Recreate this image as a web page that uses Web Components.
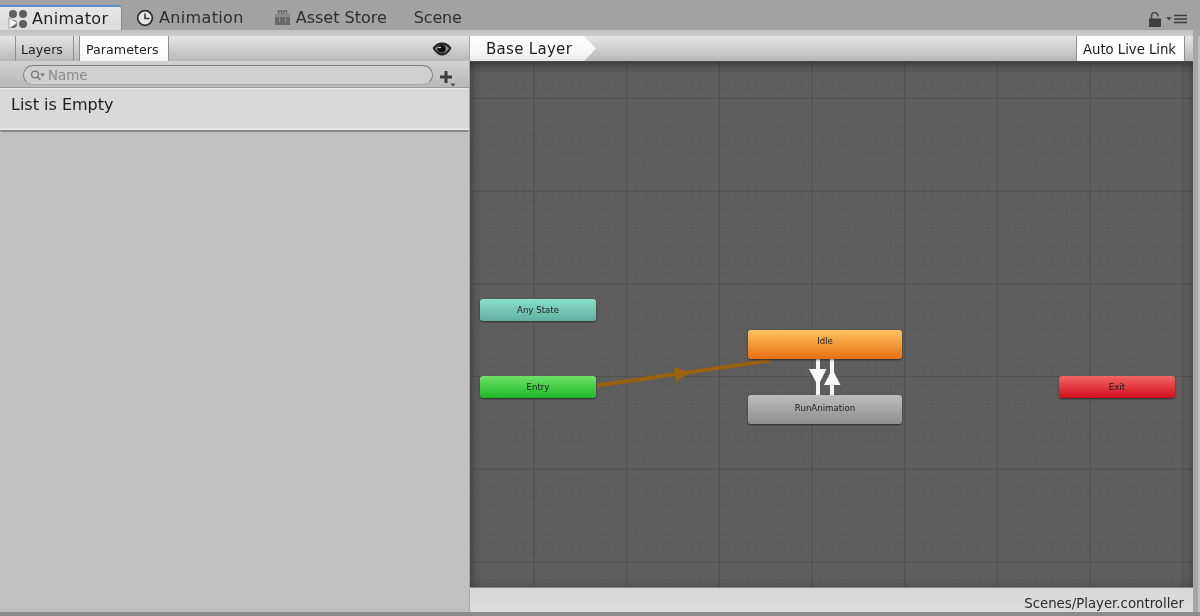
<!DOCTYPE html>
<html>
<head>
<meta charset="utf-8">
<title>Animator</title>
<style>
  html, body { margin: 0; padding: 0; background: #a4a4a4; overflow: hidden; }
</style>
</head>
<body>
<animator-window></animator-window>
<script>
class EditorTab extends HTMLElement {
  connectedCallback() {
    this.attachShadow({ mode: 'open' });
    this.shadowRoot.innerHTML = `
      <style>
        :host {
          display: flex;
          align-items: center;
          box-sizing: border-box;
          height: 25px;
          gap: 5px;
          padding: 0 8px 0 9px;
          font-size: 16px;
          letter-spacing: .35px;
          color: #2e2e2e;
        }
        :host([active]) {
          background: linear-gradient(#e6e6e6, #dcdcdc);
          border-top: 2px solid #5b8fd0;
          border-right: 1px solid #8c8c8c;
          border-radius: 0 3px 0 0;
          color: #1e1e1e;
          gap: 4px;
        }
      </style>
      <slot name="icon"></slot><slot></slot>
    `;
  }
}
customElements.define('editor-tab', EditorTab);

class ToolbarButton extends HTMLElement {
  connectedCallback() {
    this.attachShadow({ mode: 'open' });
    this.shadowRoot.innerHTML = `
      <style>
        :host {
          display: flex;
          align-items: center;
          box-sizing: border-box;
          height: 25px;
          padding: 1px 10px 0 5px;
          font-size: 12.7px;
          color: #1c1c1c;
          border-left: 1px solid #8f8f8f;
          border-right: 1px solid #8f8f8f;
        }
        :host([on]) {
          background: linear-gradient(#fff, #fff 70%, #f4f4f4);
          padding: 1px 9px 0 6px;
        }
      </style>
      <slot></slot>
    `;
  }
}
customElements.define('toolbar-button', ToolbarButton);

class ParametersPanel extends HTMLElement {
  connectedCallback() {
    this.attachShadow({ mode: 'open' });
    this.shadowRoot.innerHTML = `
      <style>
        :host {
          display: flex;
          flex-direction: column;
          background: #c0c0c0;
          box-sizing: border-box;
          width: 469px;
          min-height: 0;
        }
        .bar {
          display: flex;
          align-items: center;
          height: 25px;
          padding: 0 17px 0 15px;
          gap: 5px;
          background: linear-gradient(#e4e4e4, #d8d8d8 30%, #b8b8b8);
        }
        .eye { margin-left: auto; display: block; }
        .search-row {
          display: flex;
          align-items: flex-start;
          gap: 6px;
          height: 27px;
          box-sizing: border-box;
          padding: 4px 13px 0 23px;
          background: linear-gradient(#d2d2d2, #b8b8b8);
          border-bottom: 1px solid #9c9c9c;
        }
        .search {
          flex: 1;
          display: flex;
          align-items: center;
          box-sizing: border-box;
          height: 20px;
          padding-left: 6px;
          gap: 3px;
          border: 1.5px solid #7e7e7e;
          border-bottom-color: #a8a8a8;
          border-radius: 11px;
          background: #d0d0d0;
          font-size: 13.4px;
          color: #8a8a8a;
        }
        .plus { margin-top: 5px; }
        .list {
          height: 44px;
          box-sizing: border-box;
          padding: 6px 11px 0;
          background: #d9d9d9;
          border-bottom: 2px solid #868686;
          border-radius: 0 0 2px 2px;
          box-shadow: inset 0 1px 0 #e8e8e8, inset 0 -2px 0 #e6e6e6;
          font-size: 16px;
          color: #1c1c1c;
          line-height: 22px;
        }
      </style>
      <div class="bar">
        <toolbar-button>Layers</toolbar-button>
        <toolbar-button on>Parameters</toolbar-button>
        <svg class="eye" width="20" height="14" viewBox="0 0 20 14">
          <path d="M.5 6C4 1.5 7 .5 10 .5s6.500 1 9.500 5.500c-3 5.500-6 7.500-9.500 7.500S4 11.500.5 6z" fill="#262626"/>
          <path d="M3 6.500C5 3.500 7.500 3 10 3s5 .5 7 3.500c-2 3-4.500 4.500-7 4.500S5 9.500 3 6.500z" fill="#8f8f8f"/>
          <ellipse cx="9.500" cy="6.800" rx="4.200" ry="3.800" fill="#0c0c0c"/>
          <path d="M6 5.500h3" stroke="#d8d8d8" stroke-width="1.200"/>
        </svg>
      </div>
      <div class="search-row">
        <div class="search">
          <svg width="15" height="13" viewBox="0 0 15 13">
            <circle cx="5" cy="5.500" r="3.400" fill="none" stroke="#777" stroke-width="1.400"/>
            <path d="M7.500 8l3 3" stroke="#777" stroke-width="1.600"/>
            <path d="M10 4.500h5l-2.500 3z" fill="#777"/>
          </svg>
          <span>Name</span>
        </div>
        <svg class="plus" width="17" height="18" viewBox="0 0 17 18">
          <path d="M7 1v12M1 7h12" stroke="#3a3a3a" stroke-width="3"/>
          <path d="M11.500 13.500h5l-2.500 3z" fill="#4a4a4a"/>
        </svg>
      </div>
      <div class="list">List is Empty</div>
    `;
  }
}
customElements.define('parameters-panel', ParametersPanel);

class StateNode extends HTMLElement {
  connectedCallback() {
    this.attachShadow({ mode: 'open' });
    this.shadowRoot.innerHTML = `
      <style>
        :host {
          position: absolute;
          display: flex;
          align-items: center;
          justify-content: center;
          box-sizing: border-box;
          left: var(--x);
          top: var(--y);
          width: var(--w);
          height: var(--h);
          padding-bottom: var(--pb, 1px);
          background: linear-gradient(var(--c1), var(--c2));
          border-radius: 3px;
          box-shadow: 0 1px 2px rgba(0,0,0,.55);
          font-size: 8.6px;
          color: #1c1c1c;
        }
      </style>
      <slot></slot>
    `;
  }
}
customElements.define('state-node', StateNode);

class GraphView extends HTMLElement {
  connectedCallback() {
    this.attachShadow({ mode: 'open' });
    this.shadowRoot.innerHTML = `
      <style>
        :host {
          display: block;
          position: relative;
          flex: 1;
          min-height: 0;
          overflow: hidden;
          background-color: #5e5e5e;
          background-image:
            linear-gradient(to right, #505050 1px, transparent 1px),
            linear-gradient(to bottom, #505050 1px, transparent 1px),
            linear-gradient(to right, #5a5a5a 1px, transparent 1px),
            linear-gradient(to bottom, #5a5a5a 1px, transparent 1px);
          background-size: 92.7px 92.7px, 92.7px 92.7px, 9.27px 9.27px, 9.27px 9.27px;
          background-position: 63.5px 0, 0 36px, 8px 0, 0 8px;
        }
        .shade {
          position: absolute;
          inset: 0;
          box-shadow: inset 8px 0 8px -6px rgba(0,0,0,.3), inset 0 10px 8px -6px rgba(0,0,0,.35), inset -8px 0 8px -6px rgba(0,0,0,.2), inset 0 -8px 8px -6px rgba(0,0,0,.15);
          pointer-events: none;
        }
        svg { position: absolute; left: 0; top: 0; }
      </style>
      <div class="shade"></div>
      <svg width="723" height="525" viewBox="470 62 723 525">
        <path d="M597 385.500 770 360.500" stroke="#9a620f" stroke-width="3.800"/>
        <path d="M674 367 690 372.500 676 382z" fill="#9a620f"/>
        <path d="M818 359v36M832 359v36" stroke="#f4f4f4" stroke-width="4"/>
        <path d="M809 369h17.500l-8.500 17z" fill="#f8f8f8"/>
        <path d="M824 385h16.500l-8.200-16z" fill="#f8f8f8"/>
      </svg>
      <slot></slot>
    `;
  }
}
customElements.define('graph-view', GraphView);

class AnimatorWindow extends HTMLElement {
  connectedCallback() {
    this.attachShadow({ mode: 'open' });
    this.shadowRoot.innerHTML = `
      <style>
        :host {
          display: flex;
          flex-direction: column;
          box-sizing: border-box;
          width: 1200px;
          height: 616px;
          overflow: hidden;
          font-family: "DejaVu Sans", Verdana, sans-serif;
          background: #a6a6a6;
          border-bottom: 4px solid #8b8b8b;
          filter: blur(.35px);
        }
        .tabs {
          display: flex;
          align-items: flex-end;
          height: 30px;
          flex: none;
          background: #a2a2a2;
        }
        .tabs .spacer { flex: 1; }
        .tab-tools {
          display: flex;
          align-items: center;
          gap: 4px;
          height: 25px;
          padding: 3px 12px 0 0;
          box-sizing: border-box;
        }
        .strip { height: 6px; flex: none; background: linear-gradient(#c2c2c2, #cdcdcd); margin-right: 7px; }
        .body {
          flex: 1;
          display: flex;
          min-height: 0;
          padding-right: 5px;
          border-right: 2px solid #c0c0c0;
        }
        .right {
          flex: 1;
          display: flex;
          flex-direction: column;
          min-width: 0;
          border-left: 1px solid #a6a6a6;
        }
        .crumbs {
          display: flex;
          justify-content: space-between;
          flex: none;
          height: 26px;
          box-sizing: border-box;
          background: linear-gradient(#e4e4e4, #d8d8d8 30%, #b8b8b8);
          border-bottom: 1px solid #4a4a4a;
          padding-right: 8px;
        }
        .crumb {
          display: flex;
          align-items: center;
          width: 126px;
          height: 25px;
          box-sizing: border-box;
          padding-left: 16px;
          font-size: 15px;
          letter-spacing: .3px;
          color: #1c1c1c;
          background: linear-gradient(#fff, #f6f6f6 70%, #e8e8e8);
          clip-path: polygon(0 0, 114px 0, 100% 50%, 114px 100%, 0 100%);
        }
        .status {
          flex: none;
          height: 25px;
          box-sizing: border-box;
          display: flex;
          align-items: center;
          justify-content: flex-end;
          padding: 7px 9px 0 0;
          background: linear-gradient(#d8d8d8, #dcdcdc);
          border-top: 1px solid #8c8c8c;
          font-size: 13.300px;
          color: #2a2a2a;
        }
      </style>
      <div class="tabs">
        <editor-tab active style="width:122px">
          <svg slot="icon" width="20" height="20" viewBox="0 0 20 20" style="margin-left:-1px">
            <circle cx="5" cy="5" r="4" fill="#5f5f5f"/><circle cx="15" cy="5" r="4" fill="#5f5f5f"/>
            <circle cx="5" cy="15" r="4" fill="#5f5f5f"/><circle cx="15" cy="15" r="4" fill="#5f5f5f"/>
            <path d="M1 8.500 9.500 14 1 19.500z" fill="#f2f2f2" stroke="#8a8a8a" stroke-width=".7"/>
          </svg>
          Animator
        </editor-tab>
        <editor-tab style="margin-left:6px;padding-left:8px">
          <svg slot="icon" width="18" height="18" viewBox="0 0 18 18">
            <circle cx="9" cy="9" r="7.300" fill="#e6e6e6" stroke="#2e2e2e" stroke-width="1.700"/>
            <path d="M9 4.500V9.500H13.500" fill="none" stroke="#2e2e2e" stroke-width="1.500"/>
          </svg>
          Animation
        </editor-tab>
        <editor-tab style="margin-left:14px;padding-left:8px;letter-spacing:0">
          <svg slot="icon" width="17" height="17" viewBox="0 0 17 17">
            <path d="M1 5h15v11H1z" fill="#6a6a6a"/>
            <path d="M1 5h15v3H1z" fill="#8a8a8a"/>
            <path d="M4.500 5V2h3v3M9.500 5V2h3v3" fill="none" stroke="#666" stroke-width="1.400"/>
            <path d="M5.500 8v5M11.500 8v5" stroke="#8e8e8e"/>
          </svg>
          Asset Store
        </editor-tab>
        <editor-tab style="margin-left:10px;letter-spacing:-.2px">Scene</editor-tab>
        <div class="spacer"></div>
        <div class="tab-tools">
          <svg width="13" height="15" viewBox="0 0 13 15">
            <path d="M2.500 7V3.800a3.200 3.200 0 0 1 6.400 0V4.500" fill="none" stroke="#3e3e3e" stroke-width="1.500"/>
            <path d="M0 6.500h12V15H0z" fill="#3e3e3e"/>
          </svg>
          <svg width="22" height="10" viewBox="0 0 22 10">
            <path d="M0 3h6L3 6.500z" fill="#4a4a4a"/>
            <path d="M8 1.500h13M8 5h13M8 8.500h13" stroke="#3a3a3a" stroke-width="1.500"/>
          </svg>
        </div>
      </div>
      <div class="strip"></div>
      <div class="body">
        <parameters-panel></parameters-panel>
        <div class="right">
          <div class="crumbs">
            <div class="crumb">Base Layer</div>
            <toolbar-button on style="font-size:13.300px;padding:1px 8px 0 6px;letter-spacing:-.05px">Auto Live Link</toolbar-button>
          </div>
          <graph-view>
            <state-node style="--x:10px;--y:237px;--w:116px;--h:22px;--c1:#88dfc8;--c2:#62b0a0">Any State</state-node>
            <state-node style="--x:10px;--y:314px;--w:116px;--h:22px;--c1:#6ee268;--c2:#1db826">Entry</state-node>
            <state-node style="--x:278px;--y:268px;--w:154px;--h:29px;--c1:#fdc45f;--c2:#e96e12;--pb:8px">Idle</state-node>
            <state-node style="--x:278px;--y:333px;--w:154px;--h:29px;--c1:#bdbdbd;--c2:#8e8e8e;--pb:4px">RunAnimation</state-node>
            <state-node style="--x:589px;--y:314px;--w:116px;--h:22px;--c1:#f26464;--c2:#d20f1c">Exit</state-node>
          </graph-view>
          <div class="status">Scenes/Player.controller</div>
        </div>
      </div>
    `;
  }
}
customElements.define('animator-window', AnimatorWindow);
</script>
</body>
</html>
